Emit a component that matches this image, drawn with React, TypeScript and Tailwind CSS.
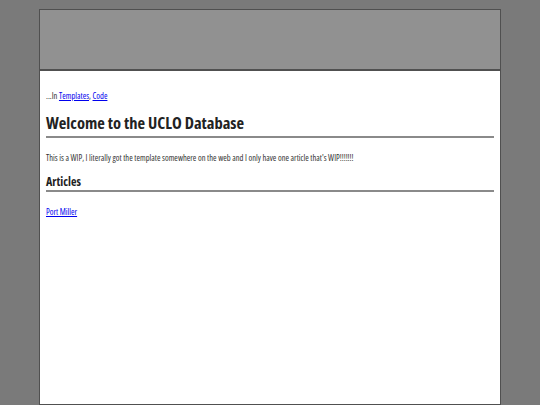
export default function App() {
  return (
    <div className="min-h-[405px] bg-[#7a7a7a] pt-[9px] font-['Open_Sans',sans-serif] font-stretch-condensed">
      <div className="ml-[39px] w-[462px] min-h-[396px] border border-[#505050] bg-white">
        {/* Header */}
        <div className="h-[61px] border-b-2 border-[#505050] bg-[#919191]" />

        {/* Content */}
        <div className="px-[6px] pt-[19px] text-[#333333]">
          <p className="text-[8.5px] leading-[12px]">
            ...In{" "}
            <a href="#" className="text-[#0000ee] underline">
              Templates
            </a>
            ,{" "}
            <a href="#" className="text-[#0000ee] underline">
              Code
            </a>
          </p>

          <h1 className="mt-[9px] border-b-2 border-[#8a8a8a] pb-[1px] text-[16.5px] font-bold leading-[24px] text-[#222222]">
            Welcome to the UCLO Database
          </h1>

          <p className="mt-[14px] text-[8.5px] leading-[12px]">
            This is a WIP, I literally got the template somewhere on the web and I only have one article that's WIP!!!!!!!
          </p>

          <h2 className="mt-[10px] border-b-2 border-[#8a8a8a] text-[12px] font-bold leading-[16px] text-[#222222]">
            Articles
          </h2>

          <p className="mt-[14px] text-[8.5px] leading-[12px]">
            <a href="#" className="text-[#0000ee] underline">
              Port Miller
            </a>
          </p>
        </div>
      </div>
    </div>
  )
}
